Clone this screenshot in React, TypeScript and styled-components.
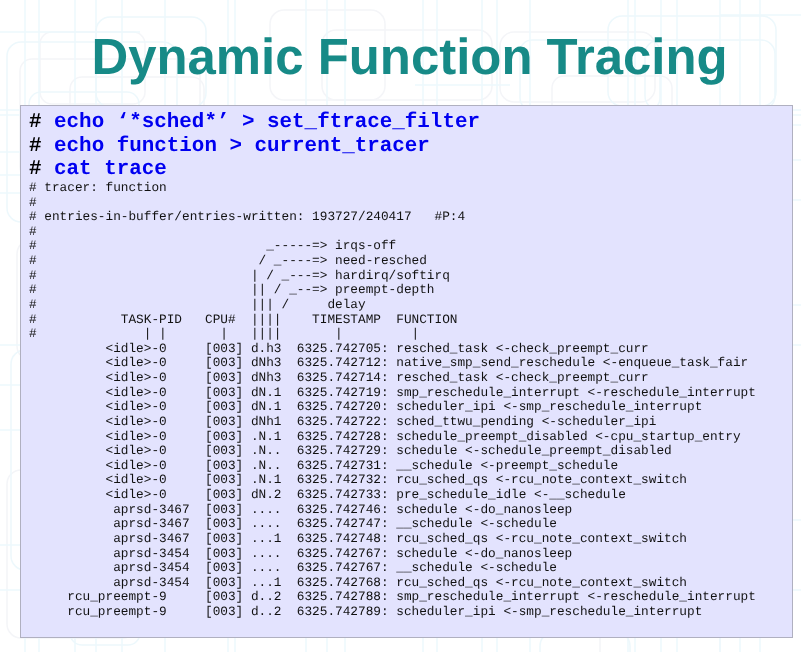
import React from 'react';
import styled, { createGlobalStyle } from 'styled-components';

const GlobalStyle = createGlobalStyle`
  html, body {
    margin: 0;
    padding: 0;
    background: #ffffff;
  }
`;

const Slide = styled.div`
  position: relative;
  width: 801px;
  height: 652px;
  overflow: hidden;
  display: flex;
  flex-direction: column;
  background: #ffffff;
  text-rendering: geometricPrecision;
`;

// faint circuit pattern behind the slide
const Backdrop = styled.svg`
  position: absolute;
  top: 0;
  left: 0;
  width: 801px;
  height: 652px;
`;

const Title = styled.h1`
  position: relative;
  height: 105px;
  margin: 0;
  display: flex;
  align-items: center;
  justify-content: center;
  padding: 8px 0 0 18px;
  box-sizing: border-box;
  font-family: 'Liberation Sans', Arial, sans-serif;
  font-size: 50.9px;
  font-weight: 700;
  color: #178a87;
  will-change: transform;
`;

const Console = styled.div`
  position: relative;
  width: 773px;
  height: 533px;
  margin-left: 20px;
  padding: 5px 8px 0;
  box-sizing: border-box;
  background: #e3e3fe;
  border: 1px solid #b0b0c0;
  font-family: 'Liberation Mono', 'Courier New', monospace;
  will-change: transform;
`;

const Command = styled.div`
  font-size: 20.88px;
  line-height: 23.5px;
  font-weight: 700;
  white-space: pre;
  color: #000000;
`;

const Typed = styled.span`
  color: #0000f0;
`;

const Trace = styled.pre`
  margin: -0.6px 0 0;
  font-family: inherit;
  font-size: 12.75px;
  line-height: 14.62px;
  color: #111111;
`;

const commands = ['echo ‘*sched*’ > set_ftrace_filter', 'echo function > current_tracer', 'cat trace'];

const traceLines = [
  '# tracer: function',
  '#',
  '# entries-in-buffer/entries-written: 193727/240417   #P:4',
  '#',
  '#                              _-----=> irqs-off',
  '#                             / _----=> need-resched',
  '#                            | / _---=> hardirq/softirq',
  '#                            || / _--=> preempt-depth',
  '#                            ||| /     delay',
  '#           TASK-PID   CPU#  ||||    TIMESTAMP  FUNCTION',
  '#              | |       |   ||||       |         |',
  '          <idle>-0     [003] d.h3  6325.742705: resched_task <-check_preempt_curr',
  '          <idle>-0     [003] dNh3  6325.742712: native_smp_send_reschedule <-enqueue_task_fair',
  '          <idle>-0     [003] dNh3  6325.742714: resched_task <-check_preempt_curr',
  '          <idle>-0     [003] dN.1  6325.742719: smp_reschedule_interrupt <-reschedule_interrupt',
  '          <idle>-0     [003] dN.1  6325.742720: scheduler_ipi <-smp_reschedule_interrupt',
  '          <idle>-0     [003] dNh1  6325.742722: sched_ttwu_pending <-scheduler_ipi',
  '          <idle>-0     [003] .N.1  6325.742728: schedule_preempt_disabled <-cpu_startup_entry',
  '          <idle>-0     [003] .N..  6325.742729: schedule <-schedule_preempt_disabled',
  '          <idle>-0     [003] .N..  6325.742731: __schedule <-preempt_schedule',
  '          <idle>-0     [003] .N.1  6325.742732: rcu_sched_qs <-rcu_note_context_switch',
  '          <idle>-0     [003] dN.2  6325.742733: pre_schedule_idle <-__schedule',
  '           aprsd-3467  [003] ....  6325.742746: schedule <-do_nanosleep',
  '           aprsd-3467  [003] ....  6325.742747: __schedule <-schedule',
  '           aprsd-3467  [003] ...1  6325.742748: rcu_sched_qs <-rcu_note_context_switch',
  '           aprsd-3454  [003] ....  6325.742767: schedule <-do_nanosleep',
  '           aprsd-3454  [003] ....  6325.742767: __schedule <-schedule',
  '           aprsd-3454  [003] ...1  6325.742768: rcu_sched_qs <-rcu_note_context_switch',
  '     rcu_preempt-9     [003] d..2  6325.742788: smp_reschedule_interrupt <-reschedule_interrupt',
  '     rcu_preempt-9     [003] d..2  6325.742789: scheduler_ipi <-smp_reschedule_interrupt',
];

const verticals = [25, 39, 75, 96, 122, 165, 228, 235, 306, 327, 345, 423, 437, 482, 497, 530, 628, 635, 661, 677, 720, 740, 760];
// x1, x2, y
const horizontals = [
  [0, 140, 32],
  [415, 510, 85],
  [720, 801, 15],
  [0, 801, 110],
  [0, 801, 115],
  [0, 24, 152],
  [0, 24, 175],
  [0, 24, 193],
  [785, 801, 125],
  [785, 801, 160],
  [785, 801, 200],
  [0, 24, 345],
  [0, 24, 385],
  [0, 24, 430],
  [785, 801, 305],
  [785, 801, 345],
  [0, 24, 545],
  [0, 24, 590],
  [785, 801, 520],
  [785, 801, 590],
];

// x, y, width, height, radius
const blueRects = [
  [7, 42, 170, 180, 14],
  [29, 92, 110, 120, 12],
  [96, 17, 110, 90, 14],
  [520, 40, 140, 70, 12],
  [608, 16, 168, 90, 14],
  [645, 40, 130, 70, 14],
  [11, 350, 60, 220, 14],
  [540, 632, 90, 60, 14],
  [70, 605, 70, 40, 12],
];

const grayRects = [
  [20, 59, 180, 120, 12],
  [70, 77, 134, 90, 12],
  [40, 32, 105, 72, 12],
  [270, 10, 115, 90, 14],
  [322, 30, 170, 70, 14],
  [500, 32, 155, 70, 14],
  [552, 76, 120, 70, 12],
  [7, 470, 130, 168, 14],
  [17, 240, 100, 120, 14],
  [600, 620, 120, 50, 14],
];

const App: React.FC = () => {
  return (
    <>
      <GlobalStyle />
      <Slide>
        <Backdrop viewBox="0 0 801 652" fill="none">
          <g stroke="#f4f5f8" strokeWidth="1.5">
            {grayRects.map(([x, y, w, h, r]) => (
              <rect key={`${x}-${y}`} x={x} y={y} width={w} height={h} rx={r} />
            ))}
          </g>
          <g stroke="#edf8fc" strokeWidth="1.5">
            {verticals.map(x => (
              <line key={x} x1={x} y1={0} x2={x} y2={652} />
            ))}
            {horizontals.map(([x1, x2, y]) => (
              <line key={`${x1}-${y}`} x1={x1} y1={y} x2={x2} y2={y} />
            ))}
            {blueRects.map(([x, y, w, h, r]) => (
              <rect key={`${x}-${y}`} x={x} y={y} width={w} height={h} rx={r} />
            ))}
          </g>
        </Backdrop>
        <Title>Dynamic Function Tracing</Title>
        <Console>
          {commands.map(command => (
            <Command key={command}>
              # <Typed>{command}</Typed>
            </Command>
          ))}
          <Trace>{traceLines.join('\n')}</Trace>
        </Console>
      </Slide>
    </>
  );
};

export default App;
